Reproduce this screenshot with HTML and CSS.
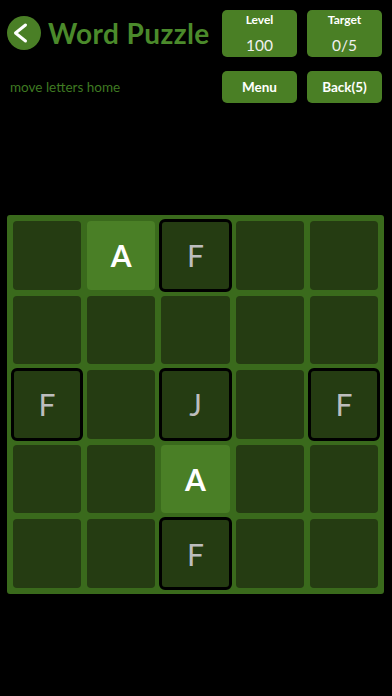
FILE: index.html
```html
<!DOCTYPE html>
<html>
<head>
<meta charset="utf-8">
<link rel="stylesheet" href="styles.css">
</head>
<body>
<div class="page">
  <header class="header">
    <div class="left">
      <div class="title-row">
        <div class="back-circle">
          <svg width="34" height="34" viewBox="0 0 34 34"><path d="M18.5 9 L8.5 17 L18.5 25" fill="none" stroke="#fff" stroke-width="3" stroke-linecap="round" stroke-linejoin="round"/></svg>
        </div>
        <h1 class="title">Word Puzzle</h1>
      </div>
      <div class="subtitle">move letters home</div>
    </div>
    <div class="controls">
      <div class="btn stat"><span class="label">Level</span><span class="value">100</span></div>
      <div class="btn stat"><span class="label">Target</span><span class="value">0/5</span></div>
      <div class="btn action">Menu</div>
      <div class="btn action">Back(5)</div>
    </div>
  </header>
  <div class="board">
    <div class="cell"></div>
    <div class="cell home">A</div>
    <div class="cell tile">F</div>
    <div class="cell"></div>
    <div class="cell"></div>

    <div class="cell"></div>
    <div class="cell"></div>
    <div class="cell"></div>
    <div class="cell"></div>
    <div class="cell"></div>

    <div class="cell tile">F</div>
    <div class="cell"></div>
    <div class="cell tile">J</div>
    <div class="cell"></div>
    <div class="cell tile">F</div>

    <div class="cell"></div>
    <div class="cell"></div>
    <div class="cell home">A</div>
    <div class="cell"></div>
    <div class="cell"></div>

    <div class="cell"></div>
    <div class="cell"></div>
    <div class="cell tile">F</div>
    <div class="cell"></div>
    <div class="cell"></div>
  </div>
</div>
</body>
</html>
```

FILE: styles.css
```css
html, body {
  margin: 0;
  padding: 0;
  background: #000;
}
body {
  font-family: Lato, "Noto Sans", sans-serif;
  width: 392px;
  height: 696px;
  overflow: hidden;
}
.page {
  display: flex;
  flex-direction: column;
}
.header {
  display: flex;
  justify-content: space-between;
  padding: 10px 10px 0 7px;
  height: 205px;
  box-sizing: border-box;
}
.left {
  display: flex;
  flex-direction: column;
}
.title-row {
  display: flex;
  align-items: center;
  gap: 7px;
  margin-top: 6px;
}
.back-circle {
  width: 34px;
  height: 34px;
  border-radius: 50%;
  background: #4a7f26;
  display: flex;
}
.title {
  margin: 0;
  font-size: 28px;
  font-weight: 700;
  color: #4b8a2b;
  letter-spacing: 0.4px;
}
.subtitle {
  margin-top: 29px;
  margin-left: 3px;
  font-size: 13.5px;
  color: #3f7a22;
}
.controls {
  display: grid;
  grid-template-columns: 75px 75px;
  grid-template-rows: 47px 32px;
  column-gap: 10px;
  row-gap: 14px;
}
.btn {
  background: #4a7f25;
  border-radius: 5px;
  color: #fff;
  display: flex;
  align-items: center;
  justify-content: center;
}
.stat {
  flex-direction: column;
  justify-content: flex-start;
}
.label {
  font-size: 12px;
  font-weight: 700;
  margin-top: 2px;
}
.value {
  font-size: 15.5px;
  margin-top: 9px;
  color: #f0f0f0;
}
.action {
  font-size: 13.5px;
  font-weight: 700;
}
.board {
  margin-left: 7px;
  margin-top: 10px;
  width: 377px;
  height: 379px;
  box-sizing: border-box;
  padding: 6px;
  background: #3a6a1c;
  border-radius: 3px;
  display: grid;
  grid-template-columns: repeat(5, 1fr);
  grid-template-rows: repeat(5, 1fr);
  gap: 6px;
}
.cell {
  background: #253c12;
  border-radius: 4px;
  display: flex;
  align-items: center;
  justify-content: center;
  font-size: 30px;
}
.home {
  background: #4a7f26;
  color: #fff;
  font-weight: 700;
}
.tile {
  color: #bdbdbd;
  outline: 3px solid #000;
  outline-offset: -1px;
}
```
